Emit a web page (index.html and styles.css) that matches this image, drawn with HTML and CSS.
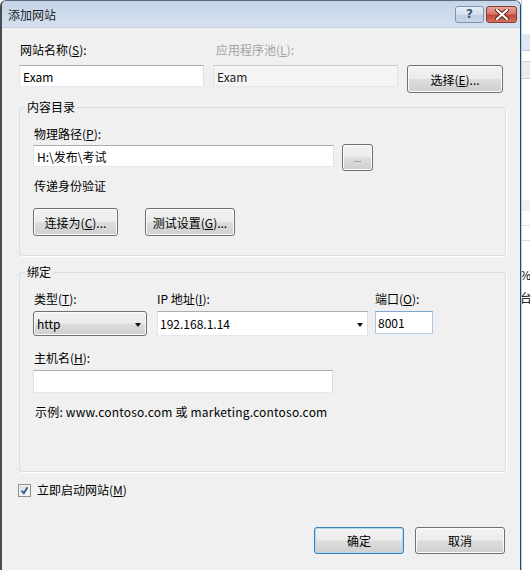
FILE: index.html
```html
<!DOCTYPE html>
<html lang="zh-CN">
<head>
<meta charset="utf-8">
<title>添加网站</title>
<link rel="stylesheet" href="styles.css">
</head>
<body>
<div class="screen">
  <div class="dialog">
    <div class="titlebar">
      <span class="title">添加网站</span>
      <div class="caption-btns">
        <div class="cap-btn help">?</div>
        <div class="cap-btn close">
          <svg width="14" height="11" viewBox="0 0 14 11">
            <path d="M2 1 L12 10 M12 1 L2 10" stroke="#5a231c" stroke-width="4" stroke-linecap="round"/>
            <path d="M2 1 L12 10 M12 1 L2 10" stroke="#ffffff" stroke-width="2.2" stroke-linecap="round"/>
          </svg>
        </div>
      </div>
    </div>
    <div class="client">
      <div class="site-grid">
        <div class="lbl">网站名称(<u>S</u>):</div>
        <div class="lbl lbl-disabled pool-lbl">应用程序池(<u>L</u>):</div>
        <div></div>
        <input class="textbox" type="text" value="Exam">
        <input class="textbox textbox-disabled" type="text" value="Exam" readonly>
        <button class="btn btn-select">选择(<u>E</u>)...</button>
      </div>

      <fieldset class="group group-content">
        <legend>内容目录</legend>
        <div class="lbl">物理路径(<u>P</u>):</div>
        <div class="path-row">
          <input class="textbox path-box" type="text" value="H:\发布\考试">
          <button class="btn btn-browse"><span class="dots">...</span></button>
        </div>
        <div class="lbl pass-lbl">传递身份验证</div>
        <div class="auth-row">
          <button class="btn btn-connect">连接为(<u>C</u>)...</button>
          <button class="btn btn-test">测试设置(<u>G</u>)...</button>
        </div>
      </fieldset>

      <fieldset class="group group-binding">
        <legend>绑定</legend>
        <div class="bind-row">
          <div class="bind-col col-type">
            <div class="lbl">类型(<u>T</u>):</div>
            <div class="combo combo-btn"><span>http</span><span class="arrow"></span></div>
          </div>
          <div class="bind-col col-ip">
            <div class="lbl">IP 地址(<u>I</u>):</div>
            <div class="combo combo-edit"><span>192.168.1.14</span><span class="arrow"></span></div>
          </div>
          <div class="bind-col col-port">
            <div class="lbl">端口(<u>O</u>):</div>
            <input class="textbox port-box" type="text" value="8001">
          </div>
        </div>
        <div class="lbl host-lbl">主机名(<u>H</u>):</div>
        <input class="textbox host-box" type="text" value="">
        <div class="lbl example">示例: www.contoso.com 或 marketing.contoso.com</div>
      </fieldset>

      <div class="check-row">
        <span class="checkbox">
          <svg width="9" height="9" viewBox="0 0 9 9">
            <path d="M1.5 4.5 L3.8 7.2 L7.5 1.2" fill="none" stroke="#2b5796" stroke-width="1.8"/>
          </svg>
        </span>
        <span class="check-lbl">立即启动网站(<u>M</u>)</span>
      </div>

      <div class="footer">
        <button class="btn btn-foot btn-default">确定</button>
        <button class="btn btn-foot">取消</button>
      </div>
    </div>
  </div>
  <div class="backdrop">
    <div class="bd-gap1"></div>
    <div class="bd-head"></div>
    <div class="bd-row1"></div>
    <div class="bd-gray"></div>
    <div class="bd-white"></div>
    <div class="bd-light"></div>
    <div class="bd-row2"></div>
    <div class="bd-row3"></div>
    <div class="bd-text t1">%</div>
    <div class="bd-text t2">台</div>
  </div>
</div>
</body>
</html>
```
FILE: styles.css
```css
* { box-sizing: border-box; }
html, body { margin: 0; padding: 0; }
body {
  width: 530px;
  height: 570px;
  overflow: hidden;
  background: #ffffff;
  font-family: "Noto Sans CJK SC", "Microsoft YaHei", sans-serif;
  font-size: 12px;
  color: #000;
}
.screen { display: flex; height: 570px; }

.dialog {
  width: 521px;
  flex: none;
  height: 570px;
  background: #f0f0f0;
  border-left: 2px solid #474c52;
  border-right: 1px solid #34465a;
  border-top: 1px solid #5d6b7b;
  border-radius: 6px 6px 0 0;
  overflow: hidden;
}

.titlebar {
  height: 27px;
  display: flex;
  align-items: center;
  justify-content: space-between;
  padding: 0 3px 0 6px;
  background: linear-gradient(#c5d5e8, #d4e0ee);
  border-bottom: 1px solid #c3cfdc;
}
.title { line-height: 16px; margin-top: 1px; color: #1b1b1b; }
.caption-btns { display: flex; gap: 2px; align-self: flex-start; margin-top: 5px; }
.cap-btn {
  height: 17px;
  border-radius: 3px;
  display: flex;
  align-items: center;
  justify-content: center;
}
.help {
  width: 29px;
  border: 1px solid #7d93ad;
  background: linear-gradient(#e7eef7 0%, #d3dfed 50%, #bccde2 51%, #c9d8ea 100%);
  color: #3e5675;
  font-family: "DejaVu Sans", sans-serif;
  font-size: 12px;
  font-weight: bold;
  line-height: 15px;
}
.close {
  width: 31px;
  border: 1px solid #8b3b30;
  background: linear-gradient(#e9a597 0%, #d8776a 45%, #c4473a 55%, #d2705f 100%);
}

.client { padding: 0 14px 0 17px; }

.lbl { line-height: 16px; height: 16px; padding-left: 1px; white-space: nowrap; }
.lbl-disabled { color: #a3a3a3; }
.pool-lbl { padding-left: 3px; }
u { text-decoration: underline; text-underline-offset: 1px; }

.site-grid {
  margin-top: 14px;
  display: grid;
  grid-template-columns: 185px 185px 96px;
  column-gap: 9px;
  row-gap: 7px;
  align-items: start;
}

.textbox {
  display: block;
  height: 22px;
  margin: 0;
  padding: 0 0 0 3px;
  font: inherit;
  color: #000;
  background: #fff;
  border: 1px solid;
  border-color: #abadb3 #dbdfe6 #e3e9ef #e2e3ea;
  outline: none;
  width: 100%;
}
.textbox-disabled {
  background: #f4f4f4;
  border-color: #c9cbcf #e0e0e0 #e8e8e8 #e0e0e0;
  color: #1e1e1e;
}

.btn {
  font: inherit;
  color: #000;
  margin: 0;
  padding: 0;
  height: 28px;
  border: 1px solid #707070;
  border-radius: 3px;
  background: linear-gradient(#f3f3f3 0%, #ebebeb 48%, #dddddd 52%, #cfcfcf 100%);
  box-shadow: inset 0 0 0 1px #fbfbfb;
  white-space: nowrap;
}

.group {
  margin: 6px 0 0;
  padding: 11px 13px 19px 13px;
  border: 1px solid #d5dfe5;
  border-radius: 3px;
  min-width: 0;
  box-shadow: 1px 1px 0 #ffffff;
}
.group legend {
  padding: 0 2px;
  margin-left: -8px;
  line-height: 16px;
  height: 16px;
}
.group-binding { margin-top: 8px; padding-bottom: 51px; }

.path-row { display: flex; align-items: flex-start; margin-top: 3px; }
.path-box { width: 301px; }
.btn-browse {
  width: 31px;
  height: 27px;
  margin-left: 8px;
  margin-top: -1px;
  display: flex;
  align-items: center;
  justify-content: center;
}
.dots {
  font-family: "DejaVu Sans", sans-serif;
  font-size: 8px;
  line-height: 8px;
  color: #444;
  margin-top: 5px;
}
.pass-lbl { margin-top: 7px; }
.auth-row { display: flex; margin-top: 14px; }
.btn-connect { width: 85px; }
.btn-test { width: 90px; margin-left: 27px; }

.bind-row { display: flex; align-items: flex-start; }
.bind-col { display: flex; flex-direction: column; gap: 4px; }
.col-type { width: 114px; }
.col-ip { width: 211px; margin-left: 10px; }
.col-ip .lbl { padding-left: 0; }
.col-port { width: 58px; margin-left: 7px; }
.col-port .lbl { padding-left: 0; }

.combo {
  height: 25px;
  display: flex;
  align-items: center;
  justify-content: space-between;
  line-height: 16px;
}
.combo-btn {
  padding: 0 5px 0 3px;
  border: 1px solid #707070;
  border-radius: 3px;
  background: linear-gradient(#f3f3f3 0%, #ebebeb 48%, #dddddd 52%, #cfcfcf 100%);
  box-shadow: inset 0 0 0 1px #fbfbfb;
}
.combo-edit {
  padding: 0 4px 0 2px;
  background: #fff;
  border: 1px solid;
  border-color: #abadb3 #dbdfe6 #e3e9ef #e2e3ea;
}
.arrow {
  width: 0;
  height: 0;
  border-left: 3.5px solid transparent;
  border-right: 3.5px solid transparent;
  border-top: 4px solid #111;
  margin-top: 2px;
}
.port-box {
  height: 23px;
  padding-left: 2px;
  border-color: #7fa6cf #a9c7e6 #b7d2ec #a9c7e6;
}

.host-lbl { margin-top: 14px; }
.host-box { width: 300px; height: 23px; margin-top: 4px; }
.example { margin-top: 11px; padding-left: 2px; letter-spacing: 0.2px; }

.check-row {
  display: flex;
  align-items: center;
  margin-top: 10px;
  margin-left: -1px;
  height: 16px;
}
.checkbox {
  width: 13px;
  height: 13px;
  border: 1px solid #8e8f8f;
  background: linear-gradient(135deg, #dcdcdc, #fbfbfb);
  box-shadow: inset 0 0 0 1px #f4f4f4;
  display: flex;
  align-items: center;
  justify-content: center;
}
.check-lbl { margin-left: 6px; line-height: 16px; }

.footer {
  display: flex;
  justify-content: flex-end;
  gap: 11px;
  margin-top: 29px;
  margin-right: 1px;
}
.btn-foot { width: 90px; height: 27px; }
.btn-default {
  border-color: #3c7fb1;
  box-shadow: inset 0 0 0 1px #a9dcf4;
}

.backdrop {
  flex: 1;
  height: 570px;
  background: #ffffff;
  border-left: 1px solid #9fd3ef;
  overflow: hidden;
}
.bd-gap1 { height: 34px; }
.bd-head { height: 17px; background: #dde8f4; border-bottom: 1px solid #bfcddd; }
.bd-row1 { height: 11px; border-bottom: 1px solid #d6d6d6; }
.bd-gray { height: 17px; background: #ececec; border-bottom: 1px solid #cfcfcf; }
.bd-white { height: 121px; }
.bd-light { height: 11px; background: #f1f1f1; }
.bd-row2 { height: 15px; border-bottom: 1px solid #dcdcdc; }
.bd-row3 { height: 15px; border-bottom: 1px solid #dcdcdc; }
.bd-text { line-height: 16px; height: 16px; margin-left: -2px; white-space: nowrap; }
.t1 { margin-top: 26px; }
.t2 { margin-top: 7px; }
```
